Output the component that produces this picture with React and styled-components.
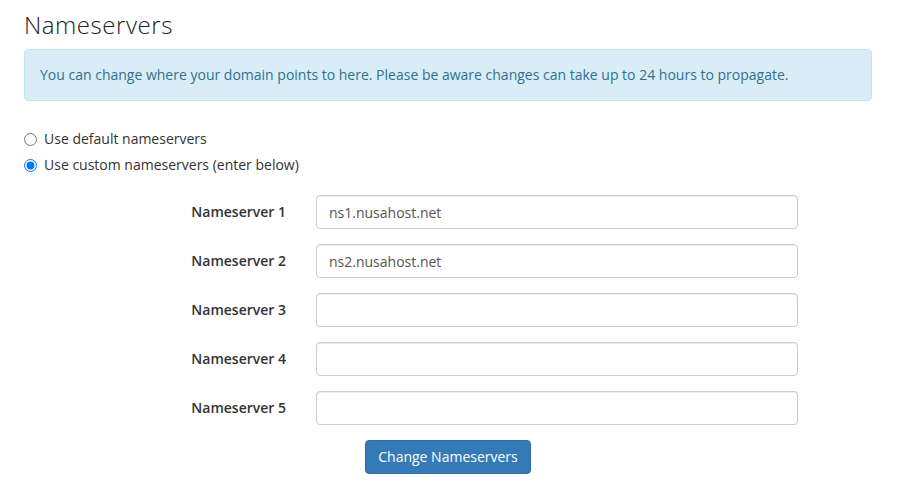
import React, { useState } from "react";
import styled, { createGlobalStyle } from "styled-components";

const GlobalStyle = createGlobalStyle`
  body {
    margin: 0;
    background: #fff;
    font-family: "Open Sans", "Liberation Sans", sans-serif;
    font-size: 14px;
    line-height: 20px;
    color: #333;
  }
`;

const Page = styled.div`
  width: 848px;
  margin-left: 24px;
  padding-top: 12px;
`;

const Title = styled.h1`
  margin: 0;
  font-size: 24px;
  line-height: 26px;
  font-weight: 300;
  letter-spacing: 0.55px;
  color: #222;
`;

const Alert = styled.div`
  margin-top: 11px;
  padding: 15px;
  background: #d9edf7;
  border: 1px solid #bce8f1;
  border-radius: 4px;
  color: #31708f;
`;

const RadioList = styled.div`
  margin-top: 28px;
  display: flex;
  flex-direction: column;
  gap: 6px;
`;

const RadioLabel = styled.label`
  display: flex;
  align-items: center;
  gap: 7px;
  cursor: pointer;

  input {
    margin: 0;
    width: 13px;
    height: 13px;
  }
`;

const Form = styled.form`
  margin-top: 20px;
  display: grid;
  grid-template-columns: 262px 482px;
  column-gap: 30px;
  row-gap: 15px;
  align-items: center;
`;

const FieldLabel = styled.label`
  text-align: right;
  font-weight: 600;
`;

const Input = styled.input`
  box-sizing: border-box;
  height: 34px;
  width: 100%;
  padding: 6px 12px;
  font-family: inherit;
  font-size: 14px;
  color: #555;
  border: 1px solid #ccc;
  border-radius: 4px;
  box-shadow: inset 0 1px 1px rgba(0, 0, 0, 0.075);
  outline: none;
`;

const Actions = styled.div`
  margin-top: 15px;
  display: flex;
  justify-content: center;
`;

const Button = styled.button`
  height: 34px;
  padding: 6px 12px;
  font-family: inherit;
  font-size: 14px;
  line-height: 20px;
  color: #fff;
  background: #337ab7;
  border: 1px solid #2e6da4;
  border-radius: 4px;
  cursor: pointer;
`;

const values = ["ns1.nusahost.net", "ns2.nusahost.net", "", "", ""];

export default function App() {
  const [mode, setMode] = useState("custom");

  return (
    <Page>
      <GlobalStyle />
      <Title>Nameservers</Title>
      <Alert>
        You can change where your domain points to here. Please be aware changes can take up to 24 hours to propagate.
      </Alert>

      <RadioList>
        <RadioLabel>
          <input
            type="radio"
            name="ns"
            checked={mode === "default"}
            onChange={() => setMode("default")}
          />
          Use default nameservers
        </RadioLabel>
        <RadioLabel>
          <input
            type="radio"
            name="ns"
            checked={mode === "custom"}
            onChange={() => setMode("custom")}
          />
          Use custom nameservers (enter below)
        </RadioLabel>
      </RadioList>

      <Form onSubmit={(e) => e.preventDefault()}>
        {values.map((v, i) => (
          <React.Fragment key={i}>
            <FieldLabel htmlFor={`ns${i + 1}`}>Nameserver {i + 1}</FieldLabel>
            <Input id={`ns${i + 1}`} defaultValue={v} />
          </React.Fragment>
        ))}
      </Form>

      <Actions>
        <Button type="submit">Change Nameservers</Button>
      </Actions>
    </Page>
  );
}
